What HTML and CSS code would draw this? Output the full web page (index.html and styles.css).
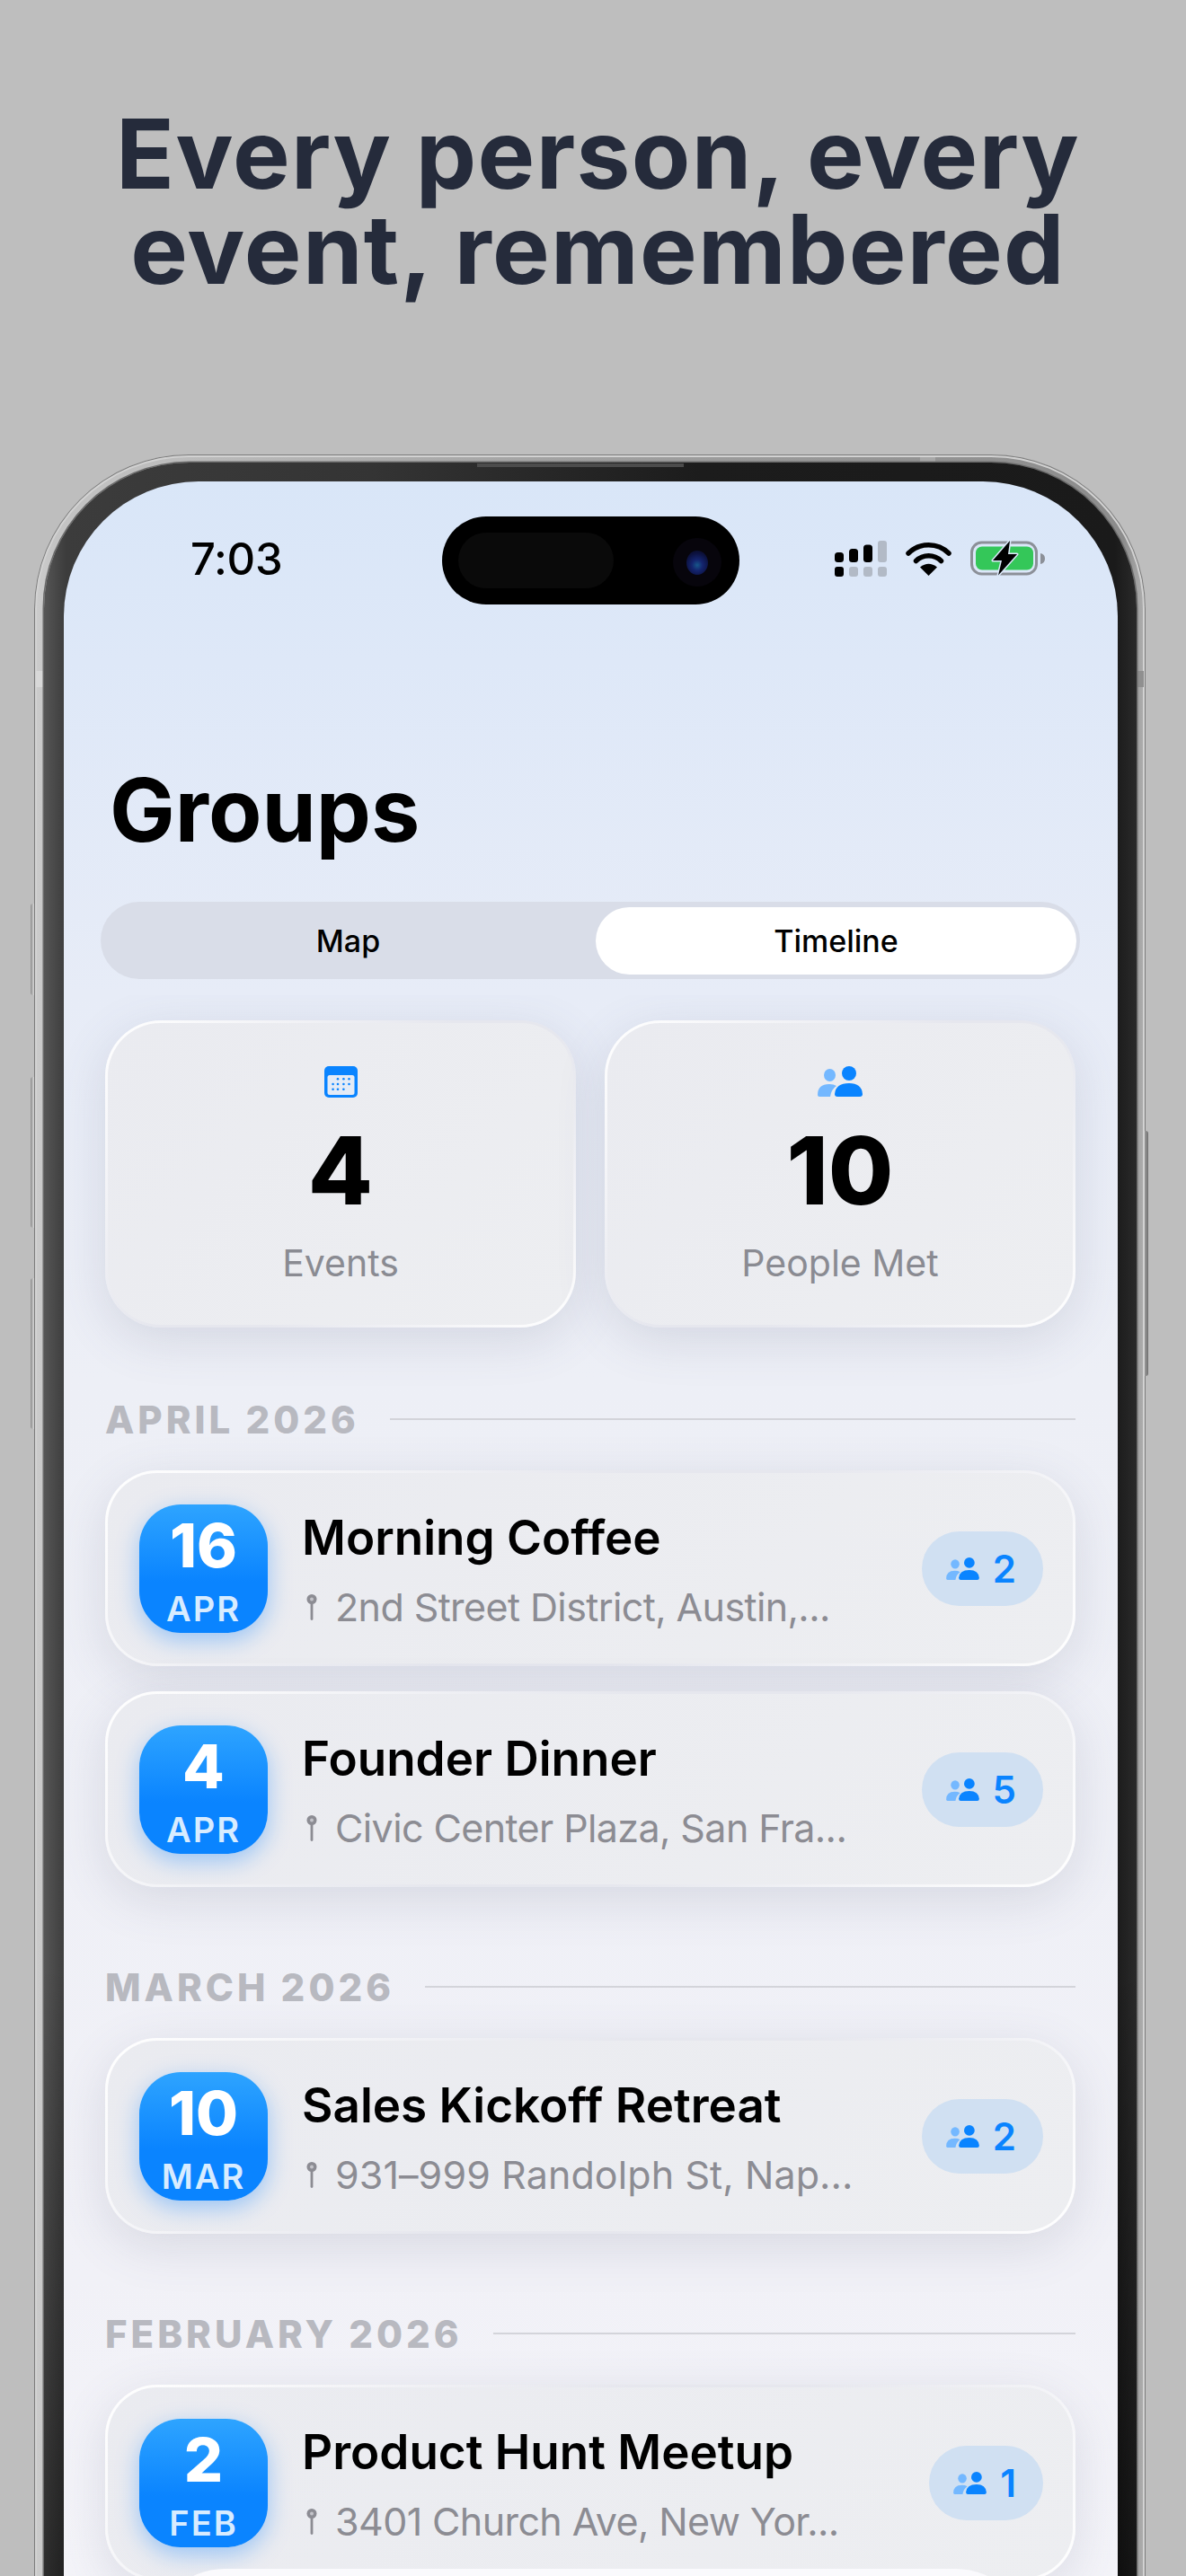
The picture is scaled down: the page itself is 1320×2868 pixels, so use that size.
FILE: index.html
```html
<!DOCTYPE html>
<html lang="en">
<head>
  <meta charset="UTF-8" />
  <title>Groups</title>
  <link rel="stylesheet" href="styles.css">
</head>
<body>
  <svg class="defs" width="0" height="0">
    <symbol id="people" viewBox="0 0 50 34">
      <ellipse cx="13.5" cy="10" rx="6.5" ry="7" fill="#74b8ff" />
      <path d="M0 32 Q0 20 13 20 Q18 20 21 22 Q15 26 14 34 L2 34 Q0 34 0 32 Z" fill="#74b8ff" />
      <circle cx="35" cy="8" r="8" fill="#0a84ff" />
      <path d="M19 31 Q20 19 35 19 Q49 19 50 31 Q50 34 47 34 L22 34 Q19 34 19 31 Z" fill="#0a84ff" />
    </symbol>
    <symbol id="pin" viewBox="0 0 12 29">
      <circle cx="6" cy="5.5" r="5.5" fill="#8c8c93" />
      <circle cx="6" cy="5.5" r="2" fill="#c4c4ca" />
      <rect x="4.6" y="9" width="2.8" height="20" rx="1.4" fill="#8c8c93" />
    </symbol>
  </svg>

  <h1 class="headline">Every person, every<br>event, remembered</h1>

  <div class="phone">
    <!-- side buttons -->
    <span class="side-btn btn-action"></span>
    <span class="side-btn btn-vol-up"></span>
    <span class="side-btn btn-vol-down"></span>
    <span class="side-btn btn-power"></span>
    <span class="band band-top"></span>
    <span class="band band-left"></span>
    <span class="band band-right"></span>

    <div class="bezel">
      <span class="speaker"></span>
      <div class="screen">
        <div class="island">
          <span class="island-pill"></span>
          <span class="camera"><span class="lens"></span></span>
        </div>

        <div class="status-bar">
          <span class="time">7:03</span>
          <div class="status-icons">
            <svg class="signal" width="58" height="40" viewBox="0 0 58 40">
              <rect x="0" y="13" width="10" height="11" rx="3.5" fill="#000" />
              <rect x="16" y="9" width="10" height="15" rx="3.5" fill="#000" />
              <rect x="32" y="4.500" width="10" height="19.500" rx="3.500" fill="#000" />
              <rect x="48" y="0" width="10" height="24" rx="3" fill="#b2bac6" />
              <rect x="0" y="29" width="10" height="11" rx="3" fill="#000" />
              <rect x="16" y="29" width="10" height="11" rx="3" fill="#b2bac6" />
              <rect x="32" y="29" width="10" height="11" rx="3" fill="#b2bac6" />
              <rect x="48" y="29" width="10" height="11" rx="3" fill="#b2bac6" />
            </svg>
            <svg class="wifi" width="51" height="38" viewBox="0 0 51 38">
              <path d="M3 13 A32 32 0 0 1 48 13" fill="none" stroke="#000" stroke-width="5.500" stroke-linecap="round" />
              <path d="M11.500 21.500 A20 20 0 0 1 39.500 21.500" fill="none" stroke="#000" stroke-width="5.500" stroke-linecap="round" />
              <path d="M25.500 38 L16 28.500 Q25.500 21 35 28.500 Z" fill="#000" />
            </svg>
            <svg class="battery" width="84" height="40" viewBox="0 0 84 40">
              <rect x="1.500" y="2" width="72" height="35" rx="11" fill="none" stroke="#8c9098" stroke-width="3" />
              <rect x="6" y="6.500" width="64" height="26" rx="7" fill="#34c759" />
              <path d="M78 14 Q83 15 83 20 Q83 25 78 26 Z" fill="#8c9098" />
              <path d="M44 0 L25 22 L35 22 L31 38.500 L52 15 L42 15 Z" fill="#000" stroke="#dae7f8" stroke-width="3" paint-order="stroke" stroke-linejoin="round" />
            </svg>
          </div>
        </div>

        <h2 class="page-title">Groups</h2>

        <div class="segment">
          <span class="segment-item">Map</span>
          <span class="segment-item segment-active">Timeline</span>
        </div>

        <div class="scroll">
          <div class="stats">
            <div class="card stat">
              <svg class="stat-icon" width="37" height="36" viewBox="0 0 37 36">
                <rect width="37" height="35" rx="5" fill="#0a84ff" />
                <rect x="3.500" y="10" width="30" height="22" rx="2.500" fill="#e4ebf6" />
                <g fill="#0a84ff">
                  <circle cx="15" cy="14.300" r="1.300" /><circle cx="21.400" cy="14.300" r="1.300" /><circle cx="27.500" cy="14.300" r="1.300" />
                  <circle cx="9.600" cy="20" r="1.300" /><circle cx="15" cy="20" r="1.300" /><circle cx="21.400" cy="20" r="1.300" /><circle cx="27.500" cy="20" r="1.300" />
                  <circle cx="9.600" cy="25.700" r="1.300" /><circle cx="15" cy="25.700" r="1.300" /><circle cx="21.400" cy="25.700" r="1.300" />
                </g>
              </svg>
              <div class="stat-num">4</div>
              <div class="stat-label">Events</div>
            </div>
            <div class="card stat">
              <svg class="stat-icon" width="50" height="36"><use href="#people" width="50" height="34" /></svg>
              <div class="stat-num">10</div>
              <div class="stat-label">People Met</div>
            </div>
          </div>

          <div class="section">
            <div class="month"><span>APRIL 2026</span><i></i></div>
            <div class="card event">
              <div class="tile"><b>16</b><span>APR</span></div>
              <div class="event-text">
                <div class="event-title">Morning Coffee</div>
                <div class="event-place"><svg width="12" height="29"><use href="#pin" /></svg>2nd Street District, Austin,...</div>
              </div>
              <div class="badge"><svg width="37" height="25"><use href="#people" width="37" height="25" /></svg>2</div>
            </div>
            <div class="card event">
              <div class="tile"><b>4</b><span>APR</span></div>
              <div class="event-text">
                <div class="event-title">Founder Dinner</div>
                <div class="event-place"><svg width="12" height="29"><use href="#pin" /></svg>Civic Center Plaza, San Fra...</div>
              </div>
              <div class="badge"><svg width="37" height="25"><use href="#people" width="37" height="25" /></svg>5</div>
            </div>
          </div>

          <div class="section">
            <div class="month"><span>MARCH 2026</span><i></i></div>
            <div class="card event">
              <div class="tile"><b>10</b><span>MAR</span></div>
              <div class="event-text">
                <div class="event-title">Sales Kickoff Retreat</div>
                <div class="event-place place-wide"><svg width="12" height="29"><use href="#pin" /></svg>931–999 Randolph St, Nap...</div>
              </div>
              <div class="badge"><svg width="37" height="25"><use href="#people" width="37" height="25" /></svg>2</div>
            </div>
          </div>

          <div class="section">
            <div class="month"><span>FEBRUARY 2026</span><i></i></div>
            <div class="card event">
              <div class="tile"><b>2</b><span>FEB</span></div>
              <div class="event-text">
                <div class="event-title">Product Hunt Meetup</div>
                <div class="event-place"><svg width="12" height="29"><use href="#pin" /></svg>3401 Church Ave, New Yor...</div>
              </div>
              <div class="badge"><svg width="37" height="25"><use href="#people" width="37" height="25" /></svg>1</div>
            </div>
          </div>
        </div>

        <div class="tab-bar"></div>
      </div>
    </div>
  </div>
</body>
</html>
```

FILE: styles.css
```css
html, body {
  margin: 0;
  height: 2868px;
  overflow: hidden;
}

body {
  background-color: #bebebe;
  font-family: Inter, "Liberation Sans", sans-serif;
  color: #000;
}

.defs {
  position: absolute;
}

.headline {
  margin: 118px 0 176px;
  padding-left: 11px;
  font-size: 107px;
  line-height: 106px;
  font-weight: 700;
  letter-spacing: 1.3px;
  text-align: center;
  color: #252b3b;
}

/* phone frame */
.phone {
  position: relative;
  box-sizing: border-box;
  width: 1237px;
  margin-left: 38px;
  padding: 9px 10px 0 11px;
  height: 2400px;
  border-radius: 172px 172px 0 0;
  background: linear-gradient(90deg, #cccccc, #c4c4c4 2%, #a0a0a0 50%, #8c8c8c 98%, #b0b0b0);
  box-shadow: inset 0 0 0 1px #7c7c7c, inset 0 0 0 3px #d2d2d2;
}

.bezel {
  position: relative;
  height: 100%;
  box-sizing: border-box;
  padding: 21px 21px 0 22px;
  border-radius: 162px 162px 0 0;
  background:
    linear-gradient(180deg, rgba(0, 0, 0, 0) 70%, rgba(0, 0, 0, 0.5)),
    linear-gradient(90deg, #565656, #3c3c3c 2%, #343434 30%, #1c1c1c 60%, #1a1a1a 98%, #2a2a2a);
  box-shadow: 0 0 0 1.5px #6a6a6a;
}

.speaker {
  position: absolute;
  top: 1px;
  left: 482px;
  width: 230px;
  height: 4px;
  background-color: #4c4c4c;
}

.side-btn {
  position: absolute;
  width: 4px;
  border-radius: 3px 0 0 3px;
  background: linear-gradient(90deg, #8a8a8a, #d8d8d8);
}

.btn-action { left: -4px; top: 500px; height: 102px; }
.btn-vol-up { left: -4px; top: 693px; height: 168px; }
.btn-vol-down { left: -4px; top: 917px; height: 168px; }
.btn-power {
  left: auto;
  right: -3px;
  top: 753px;
  height: 273px;
  border-radius: 0 3px 3px 0;
  background: linear-gradient(90deg, #9a9a9a, #707070);
}

.band {
  position: absolute;
  background-color: #a8a8a8;
}

.band-top { top: 3px; left: 986px; width: 17px; height: 6px; }
.band-left { top: 241px; left: 2px; width: 8px; height: 18px; background-color: #d8d8d8; }
.band-right { top: 241px; right: 2px; width: 7px; height: 18px; background-color: #8f8f8f; }

.screen {
  position: relative;
  height: 100%;
  overflow: hidden;
  border-radius: 150px 150px 0 0;
  background: linear-gradient(180deg, #d9e6f8 0, #dee8f8 200px, #e7ecf7 570px, #edeff6 1000px, #f1f1f7 2000px, #f4f4f9 2332px);
}

.island {
  position: absolute;
  top: 39px;
  left: 421px;
  width: 331px;
  height: 98px;
  border-radius: 49px;
  background-color: #000;
}

.island-pill {
  position: absolute;
  top: 18px;
  left: 18px;
  width: 173px;
  height: 62px;
  border-radius: 31px;
  background-color: #0a0a0a;
}

.camera {
  position: absolute;
  top: 24px;
  left: 257px;
  width: 54px;
  height: 54px;
  border-radius: 50%;
  background-color: #07050c;
}

.lens {
  position: absolute;
  top: 14px;
  left: 15px;
  width: 24px;
  height: 27px;
  border-radius: 50%;
  background: radial-gradient(circle at 50% 60%, #17578a 0, #14246e 30%, #0c1240 65%, #07081c);
}

/* status bar */
.status-bar {
  display: flex;
  align-items: center;
  justify-content: space-between;
  height: 172px;
  padding: 0 80px 0 141px;
}

.time {
  font-size: 49px;
  font-weight: 500;
  letter-spacing: -0.3px;
}

.status-icons {
  display: flex;
  align-items: center;
  gap: 21px;
}

.status-icons svg {
  display: block;
}

.page-title {
  margin: 134px 0 0 51px;
  font-size: 97px;
  line-height: 120px;
  font-weight: 700;
}

.segment {
  display: flex;
  align-items: center;
  height: 86px;
  margin: 42px 42px 0 41px;
  padding-right: 4px;
  border-radius: 43px;
  background-color: #d9dde8;
}

.segment-item {
  flex: 1;
  text-align: center;
  font-size: 34px;
  font-weight: 500;
  line-height: 75px;
}

.segment-active {
  flex: 0 0 535px;
  border-radius: 38px;
  background-color: #fff;
}

/* cards */
.scroll {
  margin-top: 18px;
  padding: 28px 47px 0 46px;
  overflow: hidden;
  height: 1800px;
}

.card {
  box-sizing: border-box;
  border: 3px solid transparent;
  background:
    linear-gradient(135deg, #eaebf0, #edeef1) padding-box,
    linear-gradient(135deg, #fff 0%, #e6e7ee 45%, #e6e7ee 60%, #fff 100%) border-box;
  box-shadow: 0 14px 54px rgba(90, 95, 125, 0.16);
}

.stats {
  display: grid;
  grid-template-columns: 1fr 1fr;
  gap: 32px;
  margin-bottom: 80px;
}

.stat {
  display: flex;
  flex-direction: column;
  align-items: center;
  height: 342px;
  padding-top: 48px;
  border-radius: 62px;
}

.stat-icon {
  display: block;
  flex: none;
}

.stat-num {
  margin-top: 35px;
  font-size: 105px;
  line-height: 90px;
  font-weight: 800;
}

.stat-label {
  margin-top: 33px;
  font-size: 41px;
  line-height: 50px;
  color: #8a8b92;
}

.section + .section {
  margin-top: 89px;
}

.month {
  display: flex;
  align-items: center;
  gap: 34px;
  height: 44px;
  margin-bottom: 35px;
  font-size: 42px;
  font-weight: 800;
  letter-spacing: 4px;
  color: #b8b9c0;
}

.month i {
  flex: 1;
  height: 2px;
  background-color: #d3d4da;
}

.event {
  display: flex;
  align-items: center;
  height: 218px;
  padding: 0 33px 0 35px;
  border-radius: 58px;
}

.event + .event {
  margin-top: 28px;
}

.tile {
  flex: none;
  box-sizing: border-box;
  display: flex;
  flex-direction: column;
  align-items: center;
  width: 143px;
  height: 143px;
  padding-top: 11px;
  border-radius: 46px;
  background: linear-gradient(180deg, #2ea4ff, #0a84ff 60%);
  box-shadow: 0 8px 26px rgba(0, 122, 255, 0.35);
  color: #fff;
}

.tile b {
  font-size: 68px;
  line-height: 68px;
  font-weight: 800;
}

.tile span {
  margin-top: 11px;
  font-size: 38px;
  line-height: 52px;
  font-weight: 600;
  letter-spacing: 2px;
  color: #d8ecff;
}

.event-text {
  flex: 1;
  min-width: 0;
  margin-left: 38px;
  padding-top: 4px;
}

.event-title {
  font-size: 53px;
  line-height: 66px;
  font-weight: 600;
}

.event-place {
  display: flex;
  align-items: center;
  gap: 20px;
  margin-top: 16px;
  padding-left: 5px;
  font-size: 43px;
  line-height: 56px;
  letter-spacing: -0.6px;
  color: #8c8c93;
}

.place-wide {
  letter-spacing: 0.1px;
}

.badge {
  flex: none;
  display: flex;
  align-items: center;
  gap: 15px;
  height: 83px;
  padding: 0 30px 0 27px;
  border-radius: 42px;
  background-color: #d0e0f2;
  font-size: 42px;
  font-weight: 600;
  color: #0a84ff;
}

.tab-bar {
  position: absolute;
  top: 2324px;
  left: 99px;
  right: 100px;
  height: 160px;
  border-radius: 80px;
  background-color: #fafafd;
}
```
